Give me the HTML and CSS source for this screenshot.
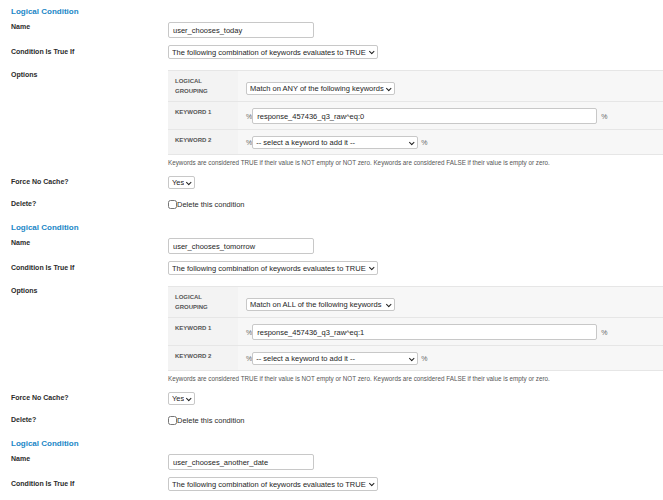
FILE: index.html
```html
<!DOCTYPE html>
<html lang="en">
<head>
    <meta charset="UTF-8">
    <title>Logical Conditions</title>
    <link rel="stylesheet" href="styles.css">
</head>
<body>
    <!-- Condition 1 -->
    <div class="condition">
        <h3 class="condition-title">Logical Condition</h3>
        <div class="field field-name">
            <span class="field-label">Name</span>
            <input type="text" class="name-input" value="user_chooses_today">
        </div>
        <div class="field field-cond">
            <span class="field-label">Condition Is True If</span>
            <span class="select-wrap">
                <select class="cond-select">
                    <option>The following combination of keywords evaluates to TRUE</option>
                </select>
            </span>
        </div>
        <div class="field">
            <span class="field-label">Options</span>
            <table class="options-table">
                <tr>
                    <th>Logical<br>Grouping</th>
                    <td>
                        <span class="select-wrap">
                            <select class="grouping-select">
                                <option>Match on ANY of the following keywords</option>
                            </select>
                        </span>
                    </td>
                </tr>
                <tr>
                    <th>Keyword 1</th>
                    <td>
                        <div class="keyword-line">
                            <span class="pct">%</span>
                            <input type="text" class="keyword-input" value="response_457436_q3_raw^eq:0">
                            <span class="pct pct-after">%</span>
                        </div>
                    </td>
                </tr>
                <tr>
                    <th>Keyword 2</th>
                    <td>
                        <div class="keyword-line">
                            <span class="pct">%</span>
                            <span class="select-wrap">
                                <select class="keyword-select">
                                    <option>-- select a keyword to add it --</option>
                                </select>
                            </span>
                            <span class="pct pct-after-select">%</span>
                        </div>
                    </td>
                </tr>
            </table>
        </div>
        <div class="field field-note">
            <span></span>
            <p class="note">Keywords are considered TRUE if their value is NOT empty or NOT zero. Keywords are considered FALSE if their value is empty or zero.</p>
        </div>
        <div class="field field-force">
            <span class="field-label">Force No Cache?</span>
            <span class="select-wrap yes-wrap">
                <select class="yes-select">
                    <option>Yes</option>
                    <option>No</option>
                </select>
            </span>
        </div>
        <div class="field field-delete">
            <span class="field-label">Delete?</span>
            <label class="delete-check"><input type="checkbox">Delete this condition</label>
        </div>
    </div>

    <!-- Condition 2 -->
    <div class="condition">
        <h3 class="condition-title">Logical Condition</h3>
        <div class="field field-name">
            <span class="field-label">Name</span>
            <input type="text" class="name-input" value="user_chooses_tomorrow">
        </div>
        <div class="field field-cond">
            <span class="field-label">Condition Is True If</span>
            <span class="select-wrap">
                <select class="cond-select">
                    <option>The following combination of keywords evaluates to TRUE</option>
                </select>
            </span>
        </div>
        <div class="field">
            <span class="field-label">Options</span>
            <table class="options-table">
                <tr>
                    <th>Logical<br>Grouping</th>
                    <td>
                        <span class="select-wrap">
                            <select class="grouping-select">
                                <option>Match on ALL of the following keywords</option>
                            </select>
                        </span>
                    </td>
                </tr>
                <tr>
                    <th>Keyword 1</th>
                    <td>
                        <div class="keyword-line">
                            <span class="pct">%</span>
                            <input type="text" class="keyword-input" value="response_457436_q3_raw^eq:1">
                            <span class="pct pct-after">%</span>
                        </div>
                    </td>
                </tr>
                <tr>
                    <th>Keyword 2</th>
                    <td>
                        <div class="keyword-line">
                            <span class="pct">%</span>
                            <span class="select-wrap">
                                <select class="keyword-select">
                                    <option>-- select a keyword to add it --</option>
                                </select>
                            </span>
                            <span class="pct pct-after-select">%</span>
                        </div>
                    </td>
                </tr>
            </table>
        </div>
        <div class="field field-note">
            <span></span>
            <p class="note">Keywords are considered TRUE if their value is NOT empty or NOT zero. Keywords are considered FALSE if their value is empty or zero.</p>
        </div>
        <div class="field field-force">
            <span class="field-label">Force No Cache?</span>
            <span class="select-wrap yes-wrap">
                <select class="yes-select">
                    <option>Yes</option>
                    <option>No</option>
                </select>
            </span>
        </div>
        <div class="field field-delete">
            <span class="field-label">Delete?</span>
            <label class="delete-check"><input type="checkbox">Delete this condition</label>
        </div>
    </div>

    <!-- Condition 3 -->
    <div class="condition">
        <h3 class="condition-title">Logical Condition</h3>
        <div class="field field-name">
            <span class="field-label">Name</span>
            <input type="text" class="name-input" value="user_chooses_another_date">
        </div>
        <div class="field field-cond">
            <span class="field-label">Condition Is True If</span>
            <span class="select-wrap">
                <select class="cond-select">
                    <option>The following combination of keywords evaluates to TRUE</option>
                </select>
            </span>
        </div>
    </div>
</body>
</html>
```

FILE: styles.css
```css
body {
    margin: 0;
    padding: 5px 0 0 11px;
    font-family: 'Liberation Sans', Arial, sans-serif;
    color: #2b2b2b;
    background-color: #fff;
    overflow: hidden;
}

.condition {
    height: 216px;
}

.condition-title {
    margin: 0 0 1px;
    font-size: 8px;
    line-height: 14px;
    font-weight: bold;
    color: #1a86c6;
}

.field {
    display: grid;
    grid-template-columns: 157px auto;
    align-items: start;
    justify-items: start;
}

.field-label {
    font-size: 7px;
    line-height: 14px;
    font-weight: bold;
    color: #2b2b2b;
}

.field-name {
    height: 25px;
}

.field-cond {
    height: 23px;
}

input[type="text"], select {
    box-sizing: border-box;
    font-family: 'Liberation Sans', Arial, sans-serif;
    font-size: 7.5px;
    color: #1e1e1e;
    background-color: #fff;
    border: 1px solid #c8c8c8;
    border-radius: 2px;
    margin: 0;
}

input[type="text"] {
    height: 16px;
    padding: 0 4px;
}

select {
    -webkit-appearance: none;
    appearance: none;
    padding: 0 10px 0 3px;
    line-height: 11px;
}

/* small chevron drawn over the native select */
.select-wrap {
    position: relative;
    display: inline-flex;
}

.select-wrap::after {
    content: "";
    position: absolute;
    right: 5px;
    top: 50%;
    width: 2.5px;
    height: 2.5px;
    border-right: 1.3px solid #222;
    border-bottom: 1.3px solid #222;
    transform: translateY(-75%) rotate(45deg);
    pointer-events: none;
}

.name-input {
    width: 146px;
    margin-top: 2px !important;
}

.cond-select {
    width: 210px;
    height: 14px;
}

.options-table {
    margin-top: 2px;
    width: 500px;
    border-collapse: collapse;
    border-spacing: 0;
    border-bottom: 1px solid #e6e6e6;
}

.options-table th, .options-table td {
    border-top: 1px solid #e6e6e6;
    padding: 6px 6px 5px;
    vertical-align: top;
    text-align: left;
}

.options-table th {
    width: 57px;
    padding-left: 7px;
    background-color: #f3f3f3;
    font-size: 6px;
    line-height: 9.5px;
    font-weight: bold;
    text-transform: uppercase;
    color: #555;
}

.options-table td {
    padding-left: 8px;
    background-color: #f7f7f7;
}

.grouping-select {
    width: 149px;
    height: 13px;
}

.keyword-line {
    display: flex;
    align-items: center;
}

.pct {
    font-size: 7px;
    color: #666;
}

.pct-after {
    margin-left: 4px;
}

.pct-after-select {
    margin-left: 3px;
}

.keyword-input {
    width: 345px;
}

.keyword-select {
    width: 166px;
    height: 13px;
}

.note {
    margin: 3px 0 0;
    font-size: 6.3px;
    line-height: 10px;
    color: #555;
    white-space: nowrap;
}

.field-force {
    margin-top: 7px;
    height: 22px;
}

.yes-wrap {
    margin-top: 1px;
}

.yes-select {
    width: 27px;
    height: 13px;
}

.field-delete {
    height: 24px;
}

.delete-check {
    display: flex;
    align-items: center;
    margin-top: 2px;
    font-size: 7.5px;
    line-height: 11px;
    color: #2b2b2b;
}

.delete-check input {
    width: 9px;
    height: 9px;
    margin: 0;
}
```
